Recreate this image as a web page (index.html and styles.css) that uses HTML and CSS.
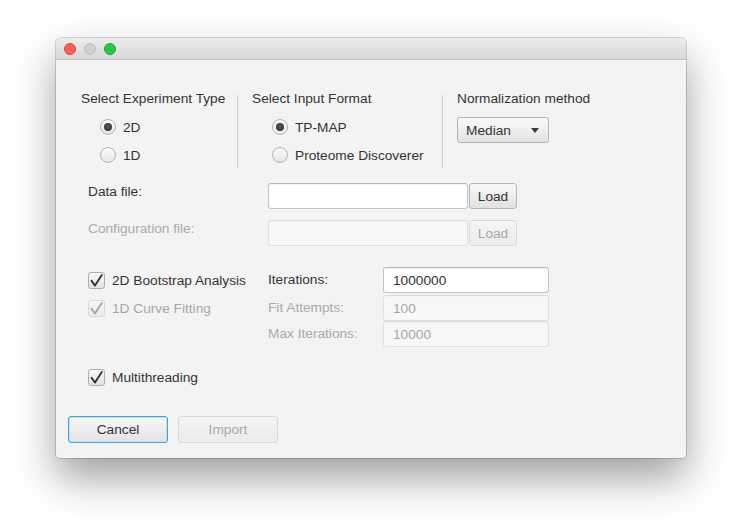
FILE: index.html
```html
<!DOCTYPE html>
<html>
<head>
<meta charset="utf-8">
<link rel="stylesheet" href="styles.css">
</head>
<body>
<div class="window">
  <div class="titlebar">
    <span class="light red"></span>
    <span class="light grey"></span>
    <span class="light green"></span>
  </div>
  <div class="content">
    <div class="top">
      <div class="col col1">
        <div class="heading">Select Experiment Type</div>
        <div class="radios">
          <div class="radio"><span class="circle on"></span><span>2D</span></div>
          <div class="radio"><span class="circle"></span><span>1D</span></div>
        </div>
      </div>
      <div class="sep"></div>
      <div class="col col2">
        <div class="heading">Select Input Format</div>
        <div class="radios radios2">
          <div class="radio"><span class="circle on"></span><span>TP-MAP</span></div>
          <div class="radio"><span class="circle"></span><span>Proteome Discoverer</span></div>
        </div>
      </div>
      <div class="sep"></div>
      <div class="col col3">
        <div class="heading">Normalization method</div>
        <div class="combo"><span>Median</span><span class="arrow"></span></div>
      </div>
    </div>

    <div class="files">
      <div class="flabel">Data file:</div>
      <div class="field"></div>
      <div class="btn load">Load</div>
      <div class="flabel disabled">Configuration file:</div>
      <div class="field disabled-box"></div>
      <div class="btn load disabled-box">Load</div>
    </div>

    <div class="options">
      <div class="check"><span class="box"><svg viewBox="0 0 17 17" width="17" height="17"><path d="M3.5 8.8 L7 13.6 L13.8 3" fill="none" stroke="#333" stroke-width="1.9" stroke-linecap="round" stroke-linejoin="round"/></svg></span><span>2D Bootstrap Analysis</span></div>
      <div class="olabel">Iterations:</div>
      <div class="field ofield">1000000</div>

      <div class="check disabled-box"><span class="box"><svg viewBox="0 0 17 17" width="17" height="17"><path d="M3.5 8.8 L7 13.6 L13.8 3" fill="none" stroke="#333" stroke-width="1.9" stroke-linecap="round" stroke-linejoin="round"/></svg></span><span>1D Curve Fitting</span></div>
      <div class="olabel disabled">Fit Attempts:</div>
      <div class="field ofield disabled-box">100</div>

      <div class="empty"></div>
      <div class="olabel disabled">Max Iterations:</div>
      <div class="field ofield disabled-box">10000</div>
    </div>

    <div class="check multi"><span class="box"><svg viewBox="0 0 17 17" width="17" height="17"><path d="M3.5 8.8 L7 13.6 L13.8 3" fill="none" stroke="#333" stroke-width="1.9" stroke-linecap="round" stroke-linejoin="round"/></svg></span><span>Multithreading</span></div>

    <div class="buttons">
      <div class="btn action focused">Cancel</div>
      <div class="btn action disabled-box">Import</div>
    </div>
  </div>
</div>
</body>
</html>
```

FILE: styles.css
```css
html, body {
  margin: 0;
  padding: 0;
  background: #ffffff;
}

body {
  font-family: "Liberation Sans", Arial, sans-serif;
  font-size: 13.7px;
  color: #333333;
  width: 742px;
  height: 532px;
  overflow: hidden;
}

.window {
  margin: 38px 0 0 56px;
  width: 630px;
  height: 420px;
  background: #f3f3f3;
  border-radius: 5px 5px 4px 4px;
  overflow: hidden;
  box-shadow: 0 0 0 1px rgba(0, 0, 0, 0.16), 0 20px 42px rgba(0, 0, 0, 0.38);
}

.titlebar {
  height: 21px;
  border-bottom: 1px solid #c2c2c2;
  background: linear-gradient(#ececec, #d8d8d8);
  display: flex;
  align-items: center;
  gap: 8px;
  padding-left: 8px;
}

.light {
  width: 12px;
  height: 12px;
  border-radius: 50%;
  box-sizing: border-box;
}
.light.red { background: #fc5f57; border: 1px solid #e0443e; }
.light.grey { background: #d0d0d0; border: 1px solid #bdbdbd; }
.light.green { background: #28c840; border: 1px solid #1fa733; }

.content {
  display: flex;
  flex-direction: column;
  align-items: flex-start;
}

.heading, .radio, .flabel, .olabel, .check {
  line-height: 16px;
  white-space: nowrap;
}

/* top section */
.top {
  display: flex;
  margin: 31px 0 0 25px;
}
.col1 { width: 156px; }
.col2 { width: 190px; padding-left: 14px; }
.col3 { padding-left: 14px; }

.sep {
  width: 1px;
  background: #cfcfcf;
  margin: 4px 0 1px 0;
}

.radios {
  margin-top: 6px;
  padding-left: 19px;
  display: flex;
  flex-direction: column;
}
.radios2 { padding-left: 20px; }

.radio {
  height: 28px;
  display: flex;
  align-items: center;
  gap: 7px;
}
.radio span:last-child { padding-top: 1px; }

.circle {
  width: 16px;
  height: 16px;
  box-sizing: border-box;
  border-radius: 50%;
  border: 1px solid #b3b3b3;
  background: linear-gradient(#fbfbfb, #e5e5e5);
  box-shadow: 0 1px 0 rgba(255,255,255,0.6);
  display: flex;
  align-items: center;
  justify-content: center;
}
.circle.on::after {
  content: "";
  width: 8px;
  height: 8px;
  border-radius: 50%;
  background: radial-gradient(circle at 50% 40%, #555, #2e2e2e);
}

.combo {
  margin-top: 10px;
  width: 92px;
  height: 26px;
  box-sizing: border-box;
  border: 1px solid #b4b4b4;
  border-radius: 3px;
  background: linear-gradient(#f9f9f9, #e2e2e2);
  display: flex;
  align-items: center;
  justify-content: space-between;
  padding: 0 9px 0 8px;
}
.arrow {
  width: 0;
  height: 0;
  border-left: 4px solid transparent;
  border-right: 4px solid transparent;
  border-top: 5px solid #3a3a3a;
  margin-top: 1px;
}

/* files */
.files {
  margin: 14px 0 0 32px;
  display: grid;
  grid-template-columns: 180px 200px 49px;
  grid-template-rows: 26px 26px;
  row-gap: 11px;
}
.flabel {
  padding-top: 1px;
}

.field {
  height: 26px;
  box-sizing: border-box;
  background: #ffffff;
  border: 1px solid #c3c3c3;
  border-top-color: #b8b8b8;
  border-radius: 3px;
  box-shadow: inset 0 1px 1px rgba(0,0,0,0.05);
  padding: 0 9px;
  display: flex;
  align-items: center;
  color: #333;
}

.btn {
  height: 26px;
  box-sizing: border-box;
  border: 1px solid #b4b4b4;
  border-radius: 3px;
  background: linear-gradient(#f8f8f8, #e2e2e2);
  display: flex;
  align-items: center;
  justify-content: center;
  color: #333;
}
.load {
  margin-left: 1px;
  width: 48px;
}

.disabled { color: #aaaaaa; }
.disabled-box { opacity: 0.4; }

/* options */
.options {
  margin: 21px 0 0 32px;
  display: grid;
  grid-template-columns: 180px 115px 166px;
  grid-template-rows: 26px 28px 26px;
  align-items: end;
}
.options .olabel,
.options .check {
  height: 26px;
  display: flex;
  align-items: center;
}
.ofield { padding: 0 9px; }

.check {
  display: flex;
  align-items: center;
  gap: 7px;
}
.box {
  width: 17px;
  height: 17px;
  box-sizing: border-box;
  border: 1px solid #adadad;
  border-radius: 3px;
  background: linear-gradient(#fafafa, #e3e3e3);
  position: relative;
  display: block;
}
.box svg {
  position: absolute;
  left: -1px;
  top: -1px;
}
.check span:last-child { padding-top: 1px; }

.multi {
  margin: 21px 0 0 32px;
  height: 18px;
}

.buttons {
  margin: 30px 0 0 12px;
  display: flex;
  gap: 10px;
}
.action {
  width: 100px;
  height: 27px;
}
.focused {
  border: 1px solid #3ba3e2;
  box-shadow: inset 0 0 0 1px #c4e2f5;
}
```
